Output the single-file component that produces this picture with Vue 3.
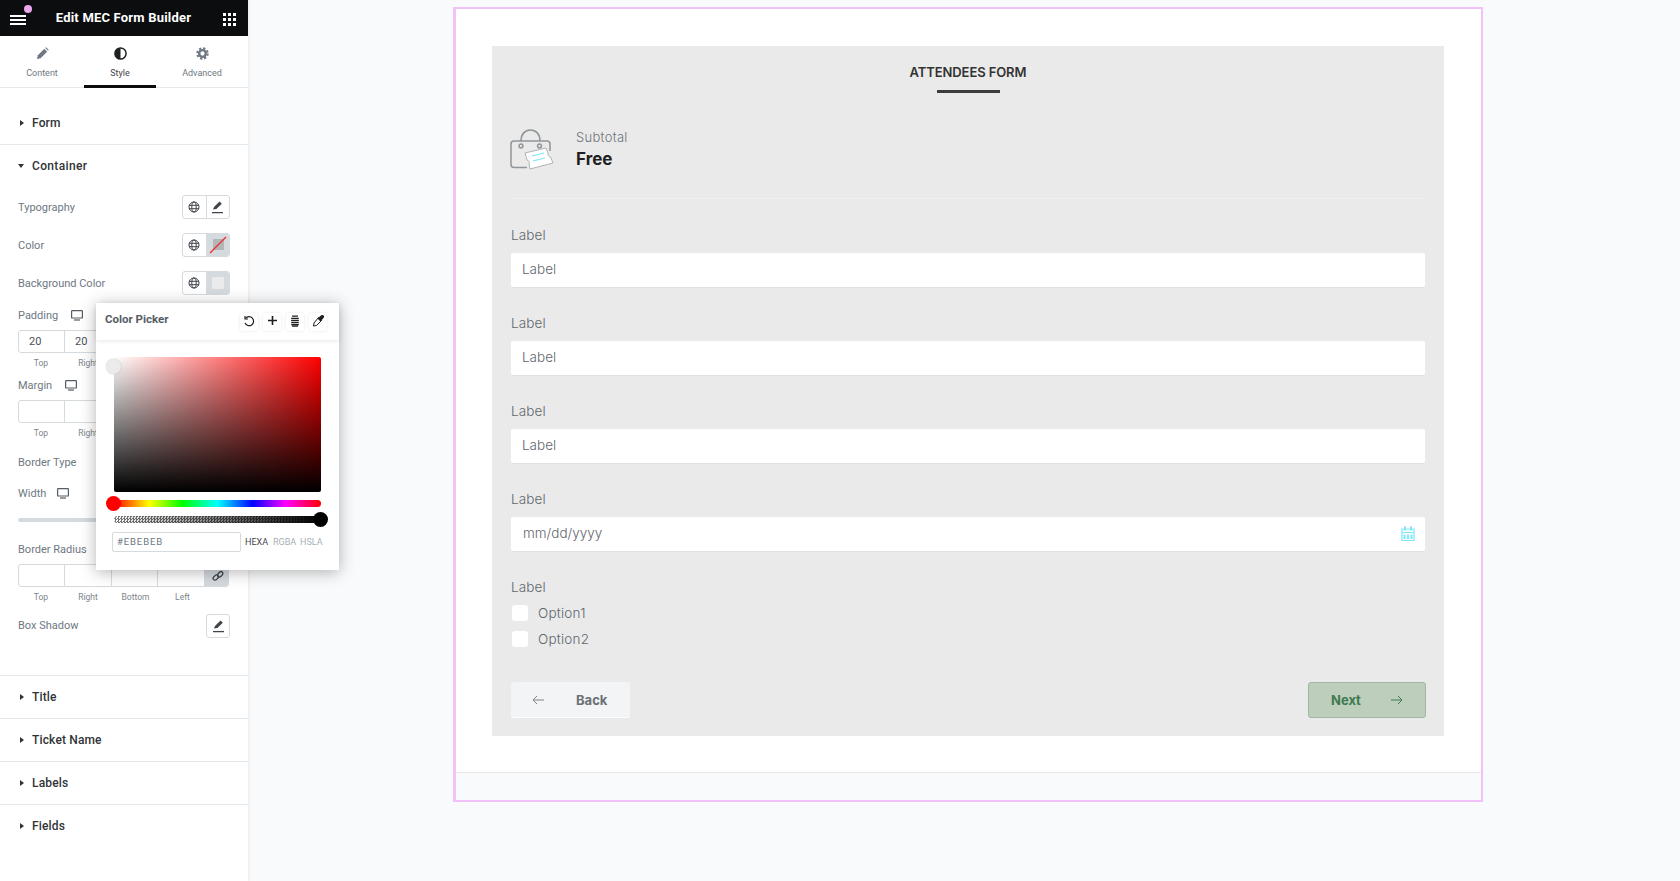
<script setup>
const tabs = [
  { name: 'Content', icon: 'pencil' },
  { name: 'Style', icon: 'half', active: true },
  { name: 'Advanced', icon: 'gear' }
]
const sides = ['Top', 'Right', 'Bottom', 'Left']
const fields = ['Label', 'Label', 'Label']
const closed = ['Title', 'Ticket Name', 'Labels', 'Fields']
const hue = 'linear-gradient(to right,#f00 0%,#ff0 17%,#0f0 33%,#0ff 50%,#00f 67%,#f0f 83%,#f00 100%)'
</script>

<template>
  <div class="page">
    <aside class="side">
      <header class="top">
        <div class="burger"><i></i><i></i><i></i><b></b></div>
        <h1>Edit MEC Form Builder</h1>
        <div class="apps"><i v-for="n in 9" :key="n"></i></div>
      </header>

      <nav class="tabs">
        <div v-for="t in tabs" :key="t.name" class="tab" :class="{ on: t.active }">
          <svg v-if="t.icon === 'pencil'" width="13" height="13" viewBox="0 0 14 14"><path d="M1 13l1-4 7-7 3 3-7 7z" fill="#6d7882"/><path d="M10 1l1-.6 2.6 2.6-.6 1z" fill="#6d7882"/></svg>
          <svg v-else-if="t.icon === 'half'" width="13" height="13" viewBox="0 0 14 14"><circle cx="7" cy="7" r="6" fill="#fff" stroke="#1d1f21" stroke-width="1.6"/><path d="M7 1a6 6 0 0 0 0 12z" fill="#1d1f21"/></svg>
          <svg v-else width="13" height="13" viewBox="0 0 14 14"><circle cx="7" cy="7" r="3.6" fill="none" stroke="#6d7882" stroke-width="2.6"/><circle cx="7" cy="7" r="5.6" fill="none" stroke="#6d7882" stroke-width="2.2" stroke-dasharray="2.4 2"/></svg>
          <span>{{ t.name }}</span>
        </div>
      </nav>

      <div class="sec form-sec"><span class="arrow"></span>Form</div>

      <section class="container">
        <div class="sec-open"><span class="arrow down"></span>Container</div>

        <div class="ctrl">
          <span>Typography</span>
          <div class="pair">
            <span class="cell"><svg class="globe" viewBox="0 0 12 12"><circle cx="6" cy="6" r="5"/><ellipse cx="6" cy="6" rx="2.2" ry="5"/><path d="M1 4.3h10M1 7.7h10"/></svg></span>
            <span class="cell"><svg width="13" height="13" viewBox="0 0 13 13"><path d="M2 8.5l1-2.6L8.6.6l2.2 2.2L5.4 8z" fill="#3f444b"/><path d="M1 11.6h11" stroke="#3f444b" stroke-width="1.3"/></svg></span>
          </div>
        </div>
        <div class="ctrl">
          <span>Color</span>
          <div class="pair">
            <span class="cell"><svg class="globe" viewBox="0 0 12 12"><circle cx="6" cy="6" r="5"/><ellipse cx="6" cy="6" rx="2.2" ry="5"/><path d="M1 4.3h10M1 7.7h10"/></svg></span>
            <span class="cell grey"><svg width="18" height="18" viewBox="0 0 18 18"><rect x="4" y="3" width="11" height="11" fill="#b3b6b8"/><path d="M1 17L17 1" stroke="#f02a2e" stroke-width="1.2"/></svg></span>
          </div>
        </div>
        <div class="ctrl">
          <span>Background Color</span>
          <div class="pair">
            <span class="cell"><svg class="globe" viewBox="0 0 12 12"><circle cx="6" cy="6" r="5"/><ellipse cx="6" cy="6" rx="2.2" ry="5"/><path d="M1 4.3h10M1 7.7h10"/></svg></span>
            <span class="cell grey"><i class="swatch"></i></span>
          </div>
        </div>

        <div class="lab">Padding <svg class="mon" viewBox="0 0 12 11"><rect x=".6" y=".6" width="10.8" height="7.4" rx=".6" fill="none" stroke="#555d66" stroke-width="1.2"/><path d="M3 10h6" stroke="#555d66" stroke-width="1.2"/></svg></div>
        <div class="dims">
          <div class="num">20</div><div class="num">20</div><div class="num"></div><div class="num"></div><div class="num link"></div>
        </div>
        <div class="caps"><span v-for="s in sides" :key="s">{{ s }}</span></div>

        <div class="lab mt2">Margin <svg class="mon" viewBox="0 0 12 11"><rect x=".6" y=".6" width="10.8" height="7.4" rx=".6" fill="none" stroke="#555d66" stroke-width="1.2"/><path d="M3 10h6" stroke="#555d66" stroke-width="1.2"/></svg></div>
        <div class="dims">
          <div class="num"></div><div class="num"></div><div class="num"></div><div class="num"></div><div class="num link"></div>
        </div>
        <div class="caps"><span v-for="s in sides" :key="s">{{ s }}</span></div>

        <div class="lab type">Border Type</div>
        <div class="lab width">Width <svg class="mon" viewBox="0 0 12 11"><rect x=".6" y=".6" width="10.8" height="7.4" rx=".6" fill="none" stroke="#555d66" stroke-width="1.2"/><path d="M3 10h6" stroke="#555d66" stroke-width="1.2"/></svg></div>
        <div class="track"></div>

        <div class="lab radius">Border Radius</div>
        <div class="dims">
          <div class="num"></div><div class="num"></div><div class="num"></div><div class="num"></div>
          <div class="num link on">
            <svg width="12" height="12" viewBox="0 0 12 12" fill="none" stroke="#3f444b" stroke-width="1.3"><rect x="0.8" y="5.6" width="6" height="3.8" rx="1.9" transform="rotate(-45 3.8 7.5)"/><rect x="5.2" y="2.4" width="6" height="3.8" rx="1.9" transform="rotate(-45 8.2 4.3)"/></svg>
          </div>
        </div>
        <div class="caps"><span v-for="s in sides" :key="s">{{ s }}</span></div>

        <div class="ctrl shadow-row">
          <span>Box Shadow</span>
          <span class="single"><svg width="13" height="13" viewBox="0 0 13 13"><path d="M2 8.5l1-2.6L8.6.6l2.2 2.2L5.4 8z" fill="#3f444b"/><path d="M1 11.6h11" stroke="#3f444b" stroke-width="1.3"/></svg></span>
        </div>
      </section>

      <div v-for="c in closed" :key="c" class="sec small"><span class="arrow"></span>{{ c }}</div>
    </aside>

    <main class="main">
      <div class="frame">
        <div class="sheet">
          <form class="form" @submit.prevent>
            <h2>ATTENDEES FORM</h2>
            <div class="rule"></div>

            <div class="total">
              <svg class="bag" width="44" height="42" viewBox="0 0 44 42">
                <g fill="none" stroke="#8f9598" stroke-width="1.5">
                  <path d="M17 38.5H4a3 3 0 0 1-3-3V15a3 3 0 0 1 3-3h33a3 3 0 0 1 3 3v7"/>
                  <path d="M11 12c0-7 4-11 9.500-11S30 5 30 12"/>
                  <circle cx="11" cy="17" r="1.9"/><circle cx="29.500" cy="17" r="1.9"/>
                </g>
                <path d="M15 24l21-5 2 5a3 3 0 0 0 2.500 4l2.500 6-23 6-1-5a3 3 0 0 0-2-4z" fill="#fff" stroke="#aeb3b6" stroke-width="1"/>
                <path d="M22 27l12-3M23 32l12-3" stroke="#7fe3f4" stroke-width="1.2"/>
              </svg>
              <div class="total-text">
                <div class="sub">Subtotal</div>
                <div class="free">Free</div>
              </div>
            </div>

            <div class="group" v-for="(f, i) in fields" :key="i">
              <div class="flabel">{{ f }}</div>
              <div class="input">{{ f }}</div>
            </div>

            <div class="group">
              <div class="flabel">Label</div>
              <div class="input date">
                <span>mm/dd/yyyy</span>
                <svg width="14" height="15" viewBox="0 0 14 15" fill="none" stroke="#7de6fc" stroke-width="1.2"><path d="M1 3h12v11.500H1zM1 6.500h12" /><path d="M4 .5v4M10 .5v4" stroke-width="2"/><path d="M3.500 8.500v4.500M7 8.500v4.500M10.500 8.500v4.500" stroke-width="2"/></svg>
              </div>
            </div>

            <div class="group checks">
              <div class="flabel">Label</div>
              <label class="opt"><i></i>Option1</label>
              <label class="opt"><i></i>Option2</label>
            </div>

            <div class="btns">
              <button type="button" class="back">
                <svg width="12" height="10" viewBox="0 0 12 10" fill="none" stroke="#7d858b"><path d="M12 5H1M5 1L1 5l4 4"/></svg>
                <span>Back</span>
              </button>
              <button type="button" class="next">
                <span>Next</span>
                <svg width="12" height="10" viewBox="0 0 12 10" fill="none" stroke="#3f7a50"><path d="M0 5h11M7 1l4 4-4 4"/></svg>
              </button>
            </div>
          </form>
        </div>
      </div>
    </main>

    <div class="picker">
      <div class="p-head">
        <span class="p-title">Color Picker</span>
        <div class="p-tools">
          <span class="tool"><svg width="12" height="12" viewBox="0 0 12 12" fill="none" stroke="#1d1f21" stroke-width="1.2"><path d="M2.500 3.500A4.500 4.500 0 1 1 2 8"/><path d="M2 1v3h3"/></svg></span>
          <span class="tool"><svg width="11" height="11" viewBox="0 0 11 11" stroke="#1d1f21" stroke-width="1.6"><path d="M5.500 1v9M1 5.500h9"/></svg></span>
          <span class="tool"><svg width="10" height="12" viewBox="0 0 10 12" fill="none" stroke="#1d1f21" stroke-width="1.300"><path d="M2 1.200h6M1.200 3.300h7.600M1.200 5.400h7.600M1.200 7.500h7.600M1.200 9.600h7.600M2 11.200h6"/></svg></span>
          <span class="tool"><svg width="12" height="12" viewBox="0 0 12 12"><path d="M6.500 2.500l3 3-5 5L1.500 11l.5-3z" fill="#fff" stroke="#1d1f21"/><path d="M5.500 3.500L9 .5a1.600 1.600 0 0 1 2.500 2.500L8.500 6.500z" fill="#1d1f21"/></svg></span>
        </div>
      </div>

      <div class="sat"><i class="sat-h"></i></div>
      <div class="bar" :style="{ background: hue }"><i class="hue-h"></i></div>
      <div class="bar alpha"><i class="alpha-h"></i></div>

      <div class="p-row">
        <div class="hex">#EBEBEB</div>
        <span class="mode on">HEXA</span>
        <span class="mode">RGBA</span>
        <span class="mode">HSLA</span>
      </div>
    </div>
  </div>
</template>

<style>
html, body { margin: 0; background: #f9fafb; }
</style>

<style scoped>
.page { position: relative; display: flex; width: 1680px; height: 881px; overflow: hidden; background: #f9fafb; font-family: Roboto, "Liberation Sans", sans-serif; }
.side { width: 248px; height: 881px; flex: none; background: #fff; box-shadow: 1px 0 3px rgba(0,0,0,.07); position: relative; }
.top { height: 36px; background: #0c0d0e; display: flex; align-items: center; position: relative; }
.top h1 { margin: 0; width: 100%; text-align: center; color: #fff; font-size: 13px; font-weight: 700; line-height: 36px; letter-spacing: .2px; padding-right: 1px; }
.burger { position: absolute; left: 10px; top: 15px; width: 16px; height: 10px; display: flex; flex-direction: column; justify-content: space-between; }
.burger i { display: block; height: 2px; background: #fff; }
.burger b { position: absolute; left: 14px; top: -10px; width: 8px; height: 8px; border-radius: 50%; background: #eba6ee; }
.apps { position: absolute; left: 223px; top: 13px; display: grid; grid-template-columns: repeat(3, 3px); gap: 2px; }
.apps i { width: 3px; height: 3px; background: #fff; }

.tabs { display: grid; grid-template-columns: 84px 72px 92px; height: 52px; border-bottom: 1px solid #e6e9ec; box-sizing: border-box; }
.tab { display: flex; flex-direction: column; align-items: center; padding-top: 11px; font-size: 9px; line-height: 14px; color: #6d7882; position: relative; box-sizing: border-box; }
.tab span { margin-top: 6px; }
.tab.on { color: #3f444b; }
.tab.on::after { content: ""; position: absolute; left: 0; right: 0; bottom: -1px; height: 3px; background: #0c0d0e; }

.sec { display: flex; align-items: center; font-size: 12px; font-weight: 500; color: #303437; letter-spacing: .15px; padding-left: 19px; box-sizing: border-box; border-bottom: 1px solid #e6e9ec; }
.form-sec { height: 57px; padding-top: 13px; }
.small { height: 43px; }
.small:last-child { border-bottom: 0; padding-bottom: 2px; }
.arrow { width: 0; height: 0; border-left: 4px solid #303437; border-top: 3px solid transparent; border-bottom: 3px solid transparent; margin-right: 8px; margin-left: 1px; }
.arrow.down { border-left: 3px solid transparent; border-right: 3px solid transparent; border-top: 4px solid #303437; border-bottom: 0; margin-left: 0; margin-right: 8px; width: 0; }

.container { height: 531px; box-sizing: border-box; border-bottom: 1px solid #e6e9ec; padding: 0 18px 0 18px; font-size: 11px; color: #6d7882; }
.sec-open { height: 43px; line-height: 20px; box-sizing: border-box; display: flex; align-items: center; padding: 11px 0 12px; font-size: 12px; font-weight: 500; color: #303437; letter-spacing: .35px; }
.ctrl { height: 38px; display: flex; justify-content: space-between; align-items: center; }
.pair { display: flex; width: 48px; height: 24px; border: 1px solid #d5dadf; border-radius: 3px; box-sizing: border-box; overflow: hidden; }
.cell { width: 50%; display: flex; align-items: center; justify-content: center; }
.cell:first-child { border-right: 1px solid #d5dadf; }
.cell.grey { background: #d5dadf; }
.globe { width: 12px; height: 12px; fill: none; stroke: #3f444b; stroke-width: 1; }
.swatch { width: 12px; height: 12px; background: #ebebeb; border-radius: 2px; }
.lab { height: 24px; padding-top: 2px; box-sizing: border-box; display: flex; align-items: center; gap: 13px; }
.mon { width: 12px; height: 11px; }
.mt2 { margin-top: 1px; }
.type { margin-top: 7px; height: 26px; }
.width { margin-top: 5px; height: 26px; gap: 11px; }
.track { height: 4px; margin-top: 13px; background: #d5dadf; border-radius: 2px; }
.radius { margin-top: 14px; }
.dims { margin: 4px 1px 0 0; display: grid; grid-template-columns: 46px 47px 46px 47px 25px; height: 23px; border: 1px solid #d5dadf; border-radius: 3px; box-sizing: border-box; overflow: hidden; }
.num { border-right: 1px solid #d5dadf; font-size: 11px; line-height: 22px; padding-left: 10px; color: #495157; box-sizing: border-box; }
.num:last-child { border-right: 0; padding: 0; }
.num.on { background: #d5dadf; display: flex; align-items: center; justify-content: center; }
.caps { display: grid; grid-template-columns: 46px 48px 47px 47px; height: 18px; line-height: 20px; font-size: 8.500px; text-align: center; color: #7d858b; }
.shadow-row { height: 40px; }
.single { width: 24px; height: 24px; margin-top: 2px; border: 1px solid #d5dadf; border-radius: 3px; box-sizing: border-box; display: flex; align-items: center; justify-content: center; }

.main { flex: 1; padding: 7px 0 0 205px; font-family: Inter, "Noto Sans", sans-serif; }
.frame { width: 1030px; height: 795px; border: solid #f0c2f7; border-width: 2px 2px 2px 3px; box-sizing: border-box; }
.sheet { height: 764px; background: #fff; border-bottom: 1px solid #e6e6e6; box-sizing: border-box; padding: 37px 37px 36px 36px; border-bottom-right-radius: 3px; }
.form { height: 690px; background: #eaeaea; box-sizing: border-box; padding: 16px 19px 0; }
h2 { margin: 0; font-size: 13px; font-weight: 600; line-height: 20px; text-align: center; color: #333; letter-spacing: -.1px; }
.rule { width: 63px; height: 3px; background: #3c3c3c; margin: 8px auto 0; }
.total { display: flex; align-items: center; gap: 22px; margin-top: 36px; height: 42px; padding-bottom: 27px; border-bottom: 1px solid #efefef; }
.bag { margin-left: -1px; }
.total-text { margin-bottom: 2px; }
.sub { font-size: 13px; line-height: 20px; color: #6f7479; font-weight: 300; letter-spacing: .3px; }
.free { font-size: 17px; line-height: 24px; font-weight: 700; color: #1f1f1f; }
.group { margin-top: 26px; }
.total + .group { margin-top: 27px; }
.flabel { font-size: 13.500px; line-height: 18px; color: #5f666c; font-weight: 300; letter-spacing: .1px; }
.input { height: 35px; margin-top: 9px; background: #fff; border-radius: 2px; border-bottom: 1px solid #e0e0e0; box-sizing: border-box; padding: 0 11px; line-height: 33px; font-size: 13.500px; color: #5f666c; font-weight: 300; }
.date { display: flex; align-items: center; justify-content: space-between; padding: 0 10px 2px 12px; }
.opt { display: flex; align-items: center; height: 26px; font-size: 13.500px; color: #5f666c; font-weight: 300; letter-spacing: .2px; }
.checks .flabel { margin-bottom: 4px; }
.opt i { width: 16px; height: 16px; margin: 0 10px 0 1px; background: #fff; border-radius: 3px; }
.btns { display: flex; justify-content: space-between; margin: 30px -1px 0 0; }
button { font: inherit; font-size: 13px; font-weight: 700; height: 36px; box-sizing: border-box; display: flex; align-items: center; border-radius: 3px; padding: 0; }
.back { width: 119px; background: #f3f4f5; color: #6a7076; border: 0; border-bottom: 1px solid #fff; padding-left: 21px; gap: 32px; }
.next { width: 118px; background: #bdcebd; color: #3f7a50; border: 1px solid #9db89f; padding-left: 22px; gap: 30px; }

.picker { position: absolute; left: 96px; top: 303px; width: 243px; height: 267px; background: #fff; box-shadow: 0 2px 15px rgba(0,0,0,.3); }
.p-head { height: 37px; display: flex; align-items: center; justify-content: space-between; padding: 0 12px 0 9px; box-shadow: 0 1px 4px rgba(0,0,0,.1); }
.p-title { font-size: 11.500px; font-weight: 700; color: #555d66; margin-bottom: 5px; }
.p-tools { display: flex; gap: 5px; }
.tool { width: 18px; height: 18px; display: flex; align-items: center; justify-content: center; border-radius: 3px; box-shadow: 0 0 3px rgba(0,0,0,.1); }
.tool svg { margin-bottom: 2px; }
.sat { position: relative; margin: 17px 0 0 18px; width: 207px; height: 135px; border-radius: 2px; background: linear-gradient(to top, #000, transparent), linear-gradient(to right, #fff, #f00); }
.sat-h { position: absolute; left: -8.500px; top: 2px; width: 15px; height: 15px; border-radius: 50%; background: #ebebeb; box-shadow: 0 0 2px rgba(0,0,0,.2); }
.bar { position: relative; margin: 8px 0 0 18px; width: 207px; height: 7px; border-radius: 4px; }
.alpha { margin-top: 9px; background: linear-gradient(to right, transparent, #000), repeating-conic-gradient(#777 0 25%, #fff 0 50%) 0 0 / 3px 3px; }
.hue-h, .alpha-h { position: absolute; top: -4px; width: 15px; height: 15px; border-radius: 50%; }
.hue-h { left: -8.500px; background: #f00; }
.alpha-h { right: -6.500px; background: #000; }
.p-row { display: flex; align-items: center; margin: 9px 0 0 16px; height: 20px; }
.hex { width: 129px; height: 20px; box-sizing: border-box; border: 1px solid #d5dadf; border-radius: 2px; padding-left: 4px; font-size: 9.500px; line-height: 18px; letter-spacing: .9px; color: #6d7882; margin-right: 4px; }
.mode { font-size: 9px; width: 27px; color: #a4afb7; }
.mode.on { color: #3f444b; width: 28px; }
</style>
